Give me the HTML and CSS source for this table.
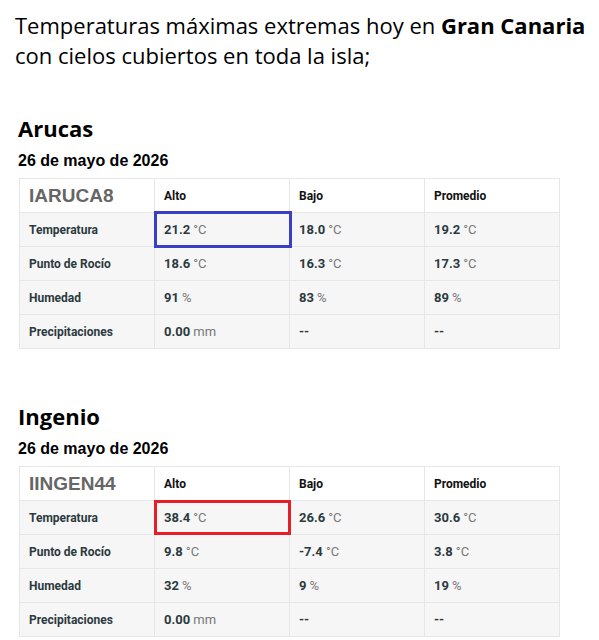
FILE: index.html
```html
<!DOCTYPE html>
<html lang="es">
<head>
    <meta charset="UTF-8">
    <meta name="viewport" content="width=device-width, initial-scale=1.0">
    <title>Temperaturas máximas - Gran Canaria</title>
    <link rel="stylesheet" href="styles.css">
</head>
<body>
    <p class="intro">Temperaturas máximas extremas hoy en <b>Gran Canaria</b><br>con cielos cubiertos en toda la isla;</p>

    <!-- Arucas -->
    <div class="station">
        <h2>Arucas</h2>
        <h3>26 de mayo de 2026</h3>
        <table class="summary">
            <tr class="head">
                <th class="station-id">IARUCA8</th>
                <th>Alto</th>
                <th>Bajo</th>
                <th>Promedio</th>
            </tr>
            <tr>
                <td class="label">Temperatura</td>
                <td class="mark blue"><b>21.2</b> <span class="unit">°C</span></td>
                <td><b>18.0</b> <span class="unit">°C</span></td>
                <td><b>19.2</b> <span class="unit">°C</span></td>
            </tr>
            <tr>
                <td class="label">Punto de Rocío</td>
                <td><b>18.6</b> <span class="unit">°C</span></td>
                <td><b>16.3</b> <span class="unit">°C</span></td>
                <td><b>17.3</b> <span class="unit">°C</span></td>
            </tr>
            <tr>
                <td class="label">Humedad</td>
                <td><b>91</b> <span class="unit">%</span></td>
                <td><b>83</b> <span class="unit">%</span></td>
                <td><b>89</b> <span class="unit">%</span></td>
            </tr>
            <tr>
                <td class="label">Precipitaciones</td>
                <td><b>0.00</b> <span class="unit">mm</span></td>
                <td><b>--</b></td>
                <td><b>--</b></td>
            </tr>
        </table>
    </div>

    <!-- Ingenio -->
    <div class="station">
        <h2>Ingenio</h2>
        <h3>26 de mayo de 2026</h3>
        <table class="summary">
            <tr class="head">
                <th class="station-id">IINGEN44</th>
                <th>Alto</th>
                <th>Bajo</th>
                <th>Promedio</th>
            </tr>
            <tr>
                <td class="label">Temperatura</td>
                <td class="mark red"><b>38.4</b> <span class="unit">°C</span></td>
                <td><b>26.6</b> <span class="unit">°C</span></td>
                <td><b>30.6</b> <span class="unit">°C</span></td>
            </tr>
            <tr>
                <td class="label">Punto de Rocío</td>
                <td><b>9.8</b> <span class="unit">°C</span></td>
                <td><b>-7.4</b> <span class="unit">°C</span></td>
                <td><b>3.8</b> <span class="unit">°C</span></td>
            </tr>
            <tr>
                <td class="label">Humedad</td>
                <td><b>32</b> <span class="unit">%</span></td>
                <td><b>9</b> <span class="unit">%</span></td>
                <td><b>19</b> <span class="unit">%</span></td>
            </tr>
            <tr>
                <td class="label">Precipitaciones</td>
                <td><b>0.00</b> <span class="unit">mm</span></td>
                <td><b>--</b></td>
                <td><b>--</b></td>
            </tr>
        </table>
    </div>
</body>
</html>
```

FILE: styles.css
```css
body {
    margin: 0;
    padding: 0;
    background: #fff;
    color: #000;
}
.intro {
    font-family: "Open Sans", sans-serif;
    font-size: 22px;
    line-height: 30px;
    margin: 0;
    padding: 10px 15px 0 15px;
    white-space: nowrap;
}
.station {
    padding-left: 18px;
}
.station h2 {
    font-family: "Open Sans", sans-serif;
    font-weight: bold;
    font-size: 22px;
    line-height: 28px;
    margin: 44px 0 0 0;
}
.station + .station h2 {
    margin-top: 53px;
}
.station h3 {
    font-family: "Liberation Sans", Arial, sans-serif;
    font-weight: bold;
    font-size: 16px;
    line-height: 20px;
    margin: 9px 0 7px 0;
}
.summary {
    width: 541px;
    margin-left: 1px;
    table-layout: fixed;
    border-collapse: collapse;
    font-family: Roboto, sans-serif;
    font-size: 12.5px;
    color: #2c3a40;
}
.summary th,
.summary td {
    border: 1px solid #e6e6e6;
    height: 33px;
    padding: 0 9px;
    text-align: left;
    vertical-align: middle;
}
.summary th {
    font-size: 12px;
    color: #111;
    background: #fff;
}
.summary th.station-id {
    font-family: "Liberation Sans", Arial, sans-serif;
    font-size: 19px;
    color: #666;
}
.summary td {
    background: #f6f6f6;
}
.summary td.label {
    font-weight: bold;
    font-size: 12px;
}
.summary b {
    font-size: 13px;
}
.unit {
    color: #777;
    font-size: 13px;
}
.mark {
    position: relative;
}
.mark::after {
    content: "";
    position: absolute;
    left: -1px;
    right: -3px;
    top: -2px;
    bottom: -2px;
    border: 3px solid;
}
.mark.blue::after {
    border-color: #3b3fc2;
}
.mark.red::after {
    border-color: #e61e28;
    top: -1px;
    bottom: -1px;
    right: -2px;
}
```
